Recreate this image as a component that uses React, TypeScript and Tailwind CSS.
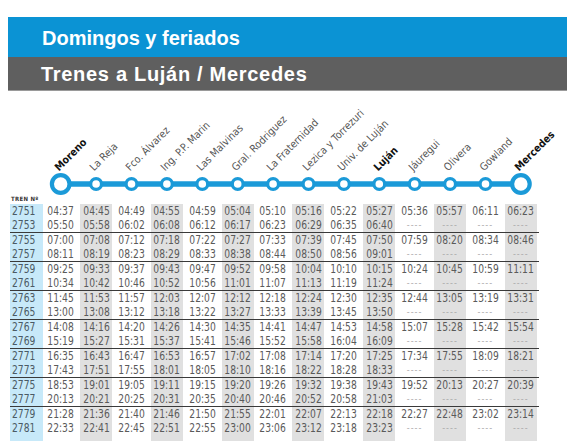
const STATIONS = [
  { name: "Moreno", bold: true },
  { name: "La Reja" },
  { name: "Fco. Álvarez" },
  { name: "Ing. P.P. Marin" },
  { name: "Las Malvinas" },
  { name: "Gral. Rodriguez" },
  { name: "La Fraternidad" },
  { name: "Lezica y Torrezuri" },
  { name: "Univ. de Luján" },
  { name: "Luján", bold: true },
  { name: "Jáuregui" },
  { name: "Olivera" },
  { name: "Gowland" },
  { name: "Mercedes", bold: true },
];

const ROWS: [string, string][] = [
  ["2751", "04:37 04:45 04:49 04:55 04:59 05:04 05:10 05:16 05:22 05:27 05:36 05:57 06:11 06:23"],
  ["2753", "05:50 05:58 06:02 06:08 06:12 06:17 06:23 06:29 06:35 06:40"],
  ["2755", "07:00 07:08 07:12 07:18 07:22 07:27 07:33 07:39 07:45 07:50 07:59 08:20 08:34 08:46"],
  ["2757", "08:11 08:19 08:23 08:29 08:33 08:38 08:44 08:50 08:56 09:01"],
  ["2759", "09:25 09:33 09:37 09:43 09:47 09:52 09:58 10:04 10:10 10:15 10:24 10:45 10:59 11:11"],
  ["2761", "10:34 10:42 10:46 10:52 10:56 11:01 11:07 11:13 11:19 11:24"],
  ["2763", "11:45 11:53 11:57 12:03 12:07 12:12 12:18 12:24 12:30 12:35 12:44 13:05 13:19 13:31"],
  ["2765", "13:00 13:08 13:12 13:18 13:22 13:27 13:33 13:39 13:45 13:50"],
  ["2767", "14:08 14:16 14:20 14:26 14:30 14:35 14:41 14:47 14:53 14:58 15:07 15:28 15:42 15:54"],
  ["2769", "15:19 15:27 15:31 15:37 15:41 15:46 15:52 15:58 16:04 16:09"],
  ["2771", "16:35 16:43 16:47 16:53 16:57 17:02 17:08 17:14 17:20 17:25 17:34 17:55 18:09 18:21"],
  ["2773", "17:43 17:51 17:55 18:01 18:05 18:10 18:16 18:22 18:28 18:33"],
  ["2775", "18:53 19:01 19:05 19:11 19:15 19:20 19:26 19:32 19:38 19:43 19:52 20:13 20:27 20:39"],
  ["2777", "20:13 20:21 20:25 20:31 20:35 20:40 20:46 20:52 20:58 21:03"],
  ["2779", "21:28 21:36 21:40 21:46 21:50 21:55 22:01 22:07 22:13 22:18 22:27 22:48 23:02 23:14"],
  ["2781", "22:33 22:41 22:45 22:51 22:55 23:00 23:06 23:12 23:18 23:23"],
];

const COL_W = 35.4;
const FIRST_X = 60.7;

function Cell({ value, shaded }: { value?: string; shaded: boolean }) {
  return (
    <div className="w-[35.4px] h-full flex justify-center">
      <div className={`w-[32px] h-full flex items-center justify-center ${shaded ? "bg-[#e0e0e0]" : ""}`}>
        {value ? (
          <span className="text-[12px] leading-none text-[#5a5a5a] scale-x-[0.85] whitespace-nowrap">{value}</span>
        ) : (
          <span className="text-[9px] leading-none tracking-[1px] text-[#a8a8a8]">----</span>
        )}
      </div>
    </div>
  );
}

export default function App() {
  return (
    <div className="w-[567px] h-[445px] bg-white overflow-hidden font-['DejaVu_Sans_Condensed','DejaVu_Sans',sans-serif]">
      {/* Header bars */}
      <div className="pt-[17px] pl-[8px] font-['Liberation_Sans',Arial,sans-serif] font-bold text-white">
        <div className="h-[40px] bg-[#0b93d4] flex items-center pl-[34px] text-[20px] pt-[2px]">
          Domingos y feriados
        </div>
        <div className="h-[34px] bg-[#5f5f5f] flex items-center pl-[33px] text-[20px] tracking-[0.7px] border-b border-[#9a9a9a]">
          Trenes a Luján / Mercedes
        </div>
      </div>

      {/* Station labels */}
      <div className="flex pl-[43px] h-[80px]">
        {STATIONS.map((s) => (
          <div key={s.name} className="w-[35.4px] h-full relative">
            <span
              className={`absolute left-[17px] -bottom-[1px] origin-bottom-left -rotate-45 whitespace-nowrap text-[10.5px] leading-none ${
                s.bold ? "font-bold text-[#111]" : "text-[#555]"
              }`}
            >
              {s.name}
            </span>
          </div>
        ))}
      </div>

      {/* Line with stops */}
      <svg width="567" height="26" className="block">
        <line x1={FIRST_X} y1={13} x2={FIRST_X + COL_W * 13} y2={13} stroke="#1b9ad8" strokeWidth={5.5} />
        {STATIONS.map((s, i) => {
          const big = i === 0 || i === STATIONS.length - 1;
          return (
            <circle
              key={s.name}
              cx={FIRST_X + COL_W * i}
              cy={13}
              r={big ? 8.8 : 5.4}
              fill="#fff"
              stroke="#1b9ad8"
              strokeWidth={big ? 4.2 : 3.2}
            />
          );
        })}
      </svg>

      {/* Table */}
      <div className="ml-[10px] w-[529px]">
        <div className="h-[5px] -mt-[1px] pl-[1px] text-[6px] leading-none font-bold text-[#333] tracking-[0.3px]">
          TREN Nº
        </div>
        <div className="mt-[3px]">
          {ROWS.map(([num, times], r) => {
            const vals = times.split(" ");
            const sep = r % 2 === 1 && r < ROWS.length - 1;
            return (
              <div key={num} className={`flex h-[14px] ${sep ? "border-b-[1.5px] border-[#3a3a3a] box-content" : ""}`}>
                <div className="w-[33px] h-full bg-[#c7e9f9] flex items-center pl-[2px]">
                  <span className="text-[12px] leading-none text-[#4b5a64] scale-x-[0.85] origin-left">{num}</span>
                </div>
                {STATIONS.map((s, i) => (
                  <Cell key={s.name} value={vals[i]} shaded={i % 2 === 1} />
                ))}
              </div>
            );
          })}
          <div className="flex h-[6px]">
            <div className="w-[33px] h-full bg-[#c7e9f9]" />
            {STATIONS.map((s, i) => (
              <div key={s.name} className="w-[35.4px] h-full flex justify-center">
                <div className={`w-[32px] h-full ${i % 2 === 1 ? "bg-[#e0e0e0]" : ""}`} />
              </div>
            ))}
          </div>
        </div>
      </div>
    </div>
  );
}
